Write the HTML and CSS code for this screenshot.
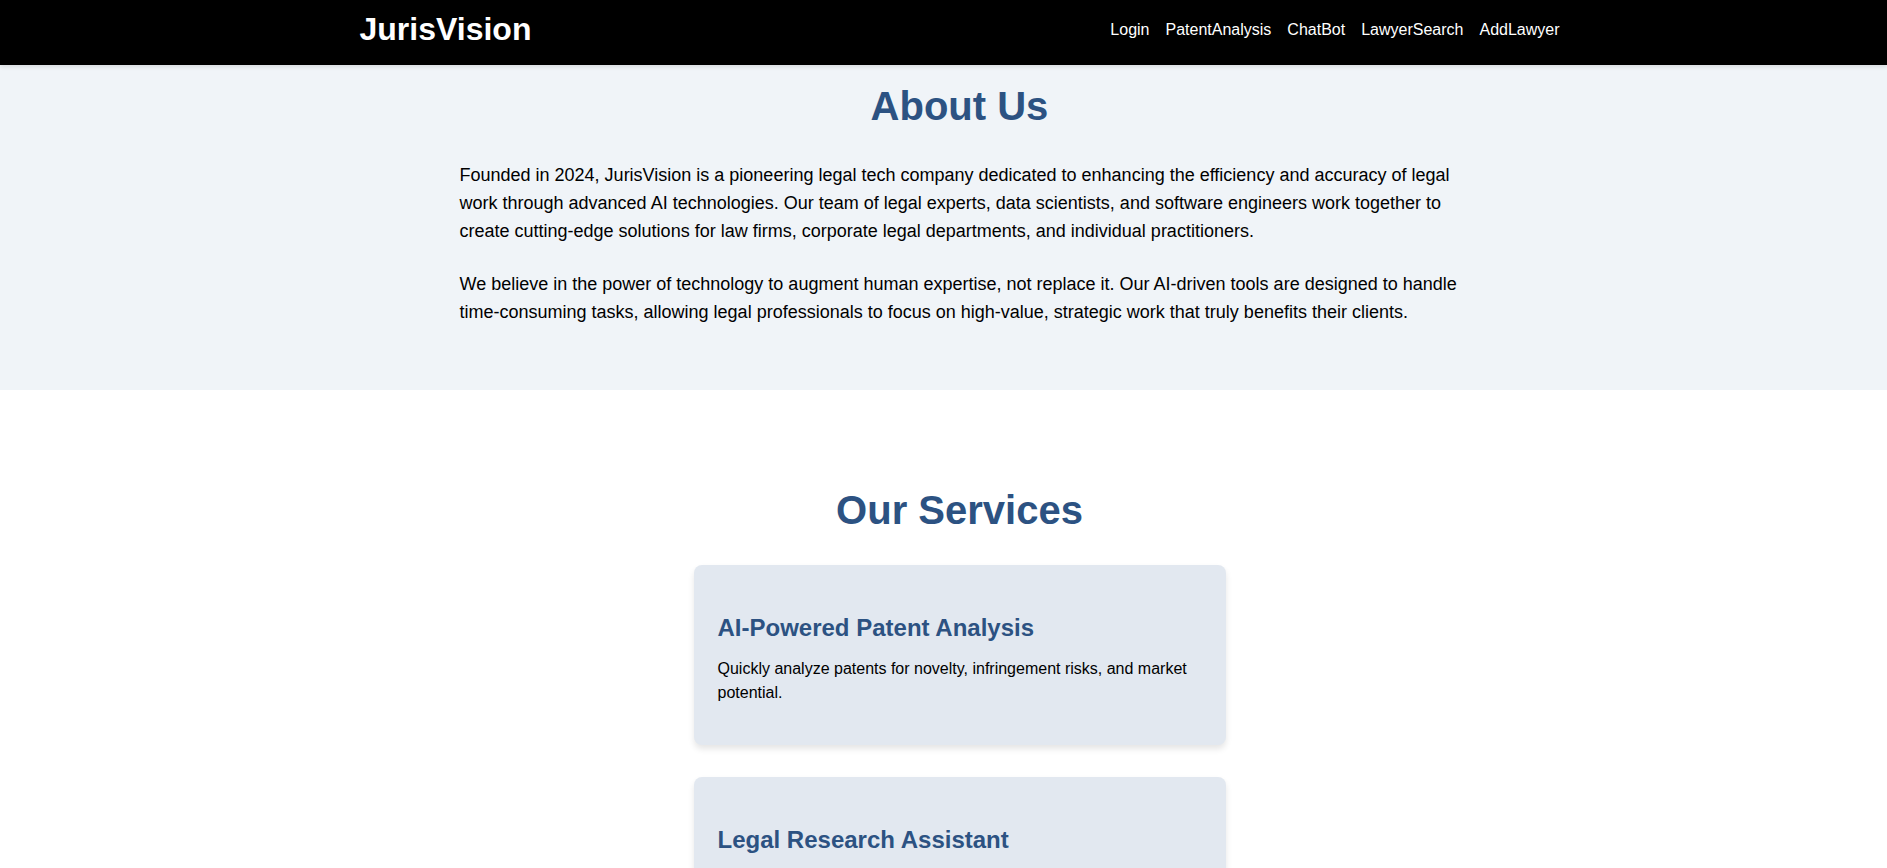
FILE: index.html
```html
<!DOCTYPE html>
<html lang="en">
<head>
<meta charset="utf-8">
<meta name="viewport" content="width=device-width, initial-scale=1">
<title>JurisVision</title>
<link rel="stylesheet" href="styles.css">
</head>
<body>
<header class="header">
  <div class="container nav-row">
    <div class="logo">JurisVision</div>
    <nav class="nav">
      <a href="#login">Login</a>
      <a href="#patent">PatentAnalysis</a>
      <a href="#chat">ChatBot</a>
      <a href="#search">LawyerSearch</a>
      <a href="#add">AddLawyer</a>
    </nav>
  </div>
</header>
<main>
  <section class="about">
    <div class="container">
      <h2 class="section-title">About Us</h2>
      <div class="about-text">
        <p>Founded in 2024, JurisVision is a pioneering legal tech company dedicated to enhancing the efficiency and accuracy of legal work through advanced AI technologies. Our team of legal experts, data scientists, and software engineers work together to create cutting-edge solutions for law firms, corporate legal departments, and individual practitioners.</p>
        <p>We believe in the power of technology to augment human expertise, not replace it. Our AI-driven tools are designed to handle time-consuming tasks, allowing legal professionals to focus on high-value, strategic work that truly benefits their clients.</p>
      </div>
    </div>
  </section>
  <section class="services">
    <div class="container">
      <h2 class="section-title">Our Services</h2>
      <div class="cards">
        <article class="card">
          <h3>AI-Powered Patent Analysis</h3>
          <p>Quickly analyze patents for novelty, infringement risks, and market potential.</p>
        </article>
        <article class="card">
          <h3>Legal Research Assistant</h3>
        </article>
      </div>
    </div>
  </section>
</main>
</body>
</html>
```
FILE: styles.css
```css
* { box-sizing: border-box; }
body {
  margin: 0;
  background: #fff;
  color: #000;
  font-family: "Liberation Sans", Arial, sans-serif;
  font-size: 16px;
  line-height: 24px;
}
.container {
  max-width: 1200px;
  margin: 0 auto;
}
.header {
  position: relative;
  background: #000;
  color: #fff;
  padding: 9px 0 15px 32px;
  box-shadow: 0 2px 4px rgba(0, 0, 0, 0.1);
}
.nav-row {
  display: flex;
  justify-content: space-between;
  align-items: center;
}
.logo {
  font-size: 32px;
  font-weight: bold;
  line-height: 41px;
}
.nav {
  display: flex;
  gap: 16px;
}
.nav a {
  color: #fff;
  text-decoration: none;
}
.section-title {
  margin: 0 0 32px;
  color: #2c5282;
  font-size: 40px;
  line-height: 46px;
  text-align: center;
}
.about {
  background: #f0f4f8;
  padding: 18px 32px 64px 64px;
}
.about-text {
  max-width: 1000px;
  margin: 0 auto;
  font-size: 18px;
  line-height: 28px;
}
.about-text p { margin: 0 0 25px; }
.about-text p:last-child { margin: 0; }
.services { padding: 97px 32px 96px 64px; }
.cards {
  display: grid;
  gap: 32px;
  max-width: 532px;
  margin: 0 auto;
}
.card {
  min-height: 180px;
  padding: 47px 24px 40px;
  background: #e2e8f0;
  border-radius: 8px;
  box-shadow: 0 4px 6px rgba(0, 0, 0, 0.1);
}
.card h3 {
  margin: 0 0 13px;
  color: #2c5282;
  font-size: 24px;
  line-height: 32px;
}
.card p { margin: 0; }
```
